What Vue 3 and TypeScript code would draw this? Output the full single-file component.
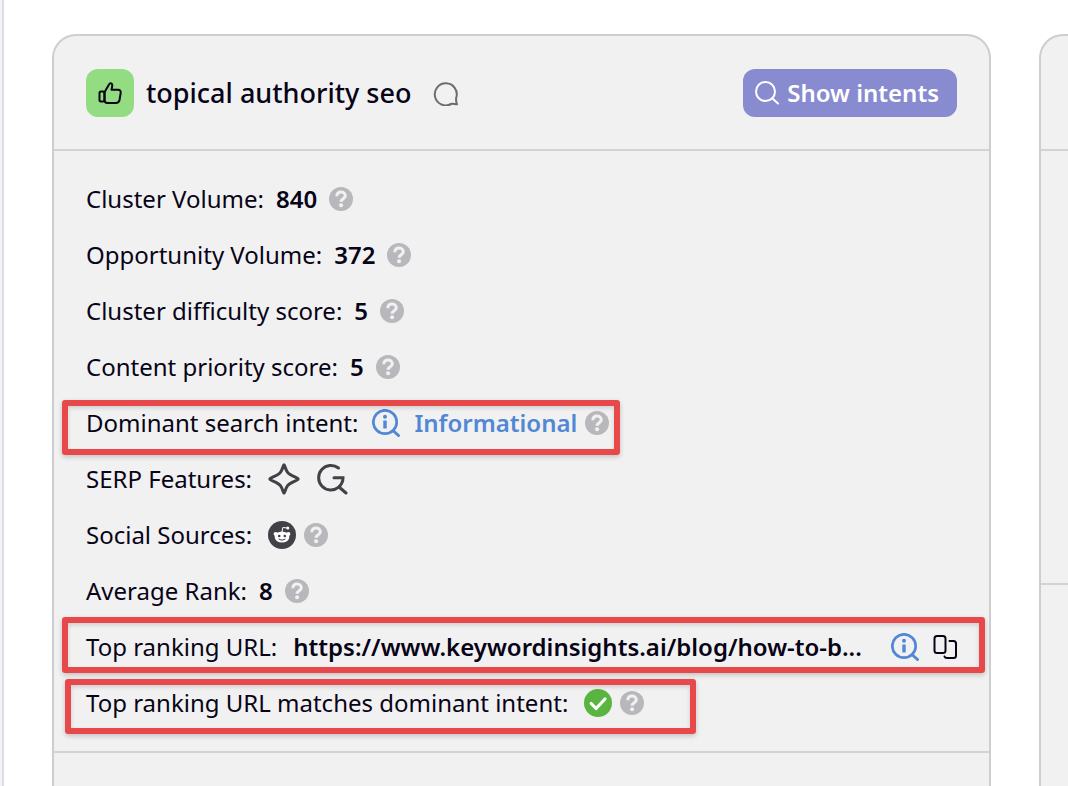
<script setup lang="ts">
import { ref } from 'vue'

interface Metric {
  id: string
  label: string
  value?: string
  kind: 'number' | 'intent' | 'serp' | 'social' | 'url' | 'match'
  help: boolean
  mark?: string
}

const metrics: Metric[] = [
  { id: 'volume', label: 'Cluster Volume:', value: '840', kind: 'number', help: true },
  { id: 'opportunity', label: 'Opportunity Volume:', value: '372', kind: 'number', help: true },
  { id: 'difficulty', label: 'Cluster difficulty score:', value: '5', kind: 'number', help: true },
  { id: 'priority', label: 'Content priority score:', value: '5', kind: 'number', help: true },
  { id: 'intent', label: 'Dominant search intent:', value: 'Informational', kind: 'intent', help: true, mark: 'mark-intent' },
  { id: 'serp', label: 'SERP Features:', kind: 'serp', help: false },
  { id: 'social', label: 'Social Sources:', kind: 'social', help: true },
  { id: 'rank', label: 'Average Rank:', value: '8', kind: 'number', help: true },
  { id: 'url', label: 'Top ranking URL:', value: 'https://www.keywordinsights.ai/blog/how-to-b...', kind: 'url', help: false, mark: 'mark-url' },
  { id: 'match', label: 'Top ranking URL matches dominant intent:', kind: 'match', help: true, mark: 'mark-match' },
]

const showIntents = ref(false)
</script>

<template>
  <div class="shell">
    <div class="rail"></div>
    <main class="page">
      <article class="card">
        <header class="head">
          <span class="badge">
            <svg width="24" height="24" viewBox="0 0 24 24" fill="none" stroke="currentColor" stroke-width="2" stroke-linejoin="round" stroke-linecap="round" aria-hidden="true">
              <path d="M6.500 11.200 11 3.600C11.600 2.500 12.300 2 13.200 2.400c1 .4 1.300 1.300 1.100 2.400L13.500 8.800H20c2 0 3 1.400 2.700 3.200l-1.200 7c-.4 2-1.700 3-3.700 3H9.500c-2 0-3-1-3-3z" />
              <rect x="1.500" y="10.500" width="5" height="10" rx="1.500" />
            </svg>
          </span>
          <h1 class="title">topical authority seo</h1>
          <button class="icon-button comment" type="button" aria-label="Comments">
            <svg width="26" height="26" viewBox="0 0 26 26" fill="none" stroke="currentColor" stroke-width="2" stroke-linejoin="round" aria-hidden="true">
              <path d="M24 24.300c-2.500-.1-4.300-.9-6-.3A11 11 0 1 1 23.300 17.500c-.6 2.300-.3 4 .7 6.800z" />
            </svg>
          </button>
          <button class="intents" type="button" :aria-pressed="showIntents" @click="showIntents = !showIntents">
            <svg width="24" height="24" viewBox="0 0 24 24" fill="none" stroke="currentColor" stroke-width="2" stroke-linecap="round" aria-hidden="true">
              <circle cx="10.500" cy="10.500" r="9.500" />
              <path d="m17.500 17.500 5.500 5" />
            </svg>
            <span>Show intents</span>
          </button>
        </header>

        <section class="metrics">
          <div v-for="m in metrics" :key="m.id" class="row">
            <span class="label">{{ m.label }}</span>

            <strong v-if="m.kind === 'number'" class="value number">{{ m.value }}</strong>

            <template v-else-if="m.kind === 'intent'">
              <svg class="info" width="28" height="28" viewBox="0 0 28 28" fill="none" aria-hidden="true">
                <circle cx="13" cy="13" r="11.700" stroke="currentColor" stroke-width="2.700" />
                <path d="m21.500 22 5 4.500" stroke="currentColor" stroke-width="3" stroke-linecap="round" />
                <circle cx="13" cy="7.700" r="2" fill="currentColor" />
                <path d="M13 11.500v8" stroke="currentColor" stroke-width="3.400" />
              </svg>
              <strong class="value intent">{{ m.value }}</strong>
            </template>

            <template v-else-if="m.kind === 'serp'">
              <svg class="serp" width="32" height="32" viewBox="0 0 32 32" fill="none" stroke="currentColor" stroke-width="3" stroke-linejoin="round" role="img" aria-label="AI overview">
                <path d="M16 1.800c.9 0 1.200 4.500 3.600 7.600C22.500 13 30.200 14.600 30.200 16s-7.700 3-10.600 6.600C17.200 25.700 16.900 30.200 16 30.200s-1.200-4.500-3.600-7.600C9.500 19 1.800 17.400 1.800 16s7.700-3 10.600-6.600C14.800 6.300 15.100 1.800 16 1.800z" />
              </svg>
              <svg class="serp" width="32" height="32" viewBox="0 0 32 32" fill="none" stroke="currentColor" stroke-width="3" stroke-linecap="round" role="img" aria-label="Search result">
                <path d="M22.500 5A12.300 12.300 0 1 0 22.800 24.200C25.600 21.500 27 18.500 27 14.800H18" />
                <path d="m23 24 7 6" />
              </svg>
            </template>

            <svg v-else-if="m.kind === 'social'" class="round" width="28" height="28" viewBox="0 0 28 28" role="img" aria-label="Reddit">
              <circle cx="14" cy="14" r="14" fill="#424147" />
              <path d="m14 11 .8-4.500 4.700.5" fill="none" stroke="#fff" stroke-width="1" />
              <circle cx="19.800" cy="7" r="1.500" fill="#fff" />
              <circle cx="7.700" cy="13" r="2.100" fill="#fff" />
              <circle cx="20.300" cy="13" r="2.100" fill="#fff" />
              <ellipse cx="14" cy="16" rx="7.400" ry="5.500" fill="#fff" />
              <circle cx="11.200" cy="15" r="1.300" fill="#424147" />
              <circle cx="16.800" cy="15" r="1.300" fill="#424147" />
              <path d="M11 18.300q3 2 6 0" fill="none" stroke="#424147" stroke-width="1" stroke-linecap="round" />
            </svg>

            <template v-else-if="m.kind === 'url'">
              <a class="value url" href="https://www.keywordinsights.ai/blog/">{{ m.value }}</a>
              <svg class="info" width="28" height="28" viewBox="0 0 28 28" fill="none" role="img" aria-label="Informational">
                <circle cx="13" cy="13" r="11.700" stroke="currentColor" stroke-width="2.700" />
                <path d="m21.500 22 5 4.500" stroke="currentColor" stroke-width="3" stroke-linecap="round" />
                <circle cx="13" cy="7.700" r="2" fill="currentColor" />
                <path d="M13 11.500v8" stroke="currentColor" stroke-width="3.400" />
              </svg>
              <button class="icon-button copy" type="button" aria-label="Copy URL">
                <svg width="24" height="24" viewBox="0 0 24 24" fill="none" stroke="currentColor" stroke-width="2" stroke-linecap="round" stroke-linejoin="round" aria-hidden="true">
                  <rect x="1.500" y="1" width="11" height="17" rx="2.500" />
                  <path d="M16.500 6H20.500q2.500 0 2.500 2.500V20.500q0 2.500-2.500 2.500H14q-2 0-2.500-1.500" />
                </svg>
              </button>
            </template>

            <svg v-else class="round" width="28" height="28" viewBox="0 0 28 28" role="img" aria-label="Yes">
              <circle cx="14" cy="14" r="14" fill="#5ab440" />
              <path d="m7.200 14.500 4.900 5L21 10" fill="none" stroke="#fff" stroke-width="3.200" stroke-linecap="round" stroke-linejoin="round" />
            </svg>

            <button v-if="m.help" class="icon-button help" type="button" :aria-label="'About ' + m.label">
              <svg width="24" height="24" viewBox="0 0 24 24" fill="none" aria-hidden="true">
                <circle cx="12" cy="12" r="12" fill="#b8b7bc" />
                <path d="M7.800 9.300C7.900 6.600 9.500 5 12 5c2.500 0 4.300 1.500 4.300 3.700 0 3-4.200 3-4.200 6" stroke="#f1f1f1" stroke-width="3" />
                <circle cx="12.100" cy="18.300" r="2" fill="#f1f1f1" />
              </svg>
            </button>

            <span v-if="m.mark" class="mark" :class="m.mark"></span>
          </div>
        </section>
      </article>

      <article class="card" aria-hidden="true">
        <div class="head"></div>
        <div class="metrics short"></div>
      </article>
    </main>
  </div>
</template>

<style>
body {
  margin: 0;
  background: #fff;
}
</style>

<style scoped>
.shell {
  display: flex;
  min-height: 100vh;
  overflow: hidden;
  background: #fff;
  color: #080417;
  font-family: 'Noto Sans', 'Open Sans', sans-serif;
  font-size: 24px;
  line-height: 32px;
}
.rail {
  flex: none;
  width: 2px;
  border-right: 2px solid #dcdde1;
  background: #f1f3f6;
}
.page {
  flex: 1;
  display: flex;
  gap: 48px;
  min-width: 0;
  padding: 34px 0 0 48px;
}
.card {
  box-sizing: border-box;
  flex: 0 0 calc(100vw - 129px);
  min-width: 0;
  border: 2px solid #cdcdd2;
  border-bottom: 0;
  border-radius: 24px 24px 0 0;
  background: #f1f1f1;
}
.head {
  box-sizing: border-box;
  display: flex;
  align-items: center;
  min-height: 115px;
  padding: 0 32px;
  border-bottom: 2px solid #d3d3d3;
}
.badge {
  display: grid;
  place-items: center;
  width: 48px;
  height: 48px;
  border-radius: 12px;
  background: #93dc81;
}
.title {
  margin: 0 0 0 12px;
  font-size: 27px;
  font-weight: 500;
}
.icon-button {
  display: block;
  flex: none;
  padding: 0;
  border: 0;
  background: none;
  color: inherit;
  line-height: 0;
  cursor: pointer;
}
.comment {
  margin-left: 22px;
  color: #6c6c6c;
}
.intents {
  display: flex;
  align-items: center;
  gap: 8px;
  height: 48px;
  margin-left: auto;
  padding: 0 18px 0 12px;
  border: 0;
  border-radius: 12px;
  background: #898bd0;
  color: #fff;
  font: inherit;
  font-weight: 600;
  white-space: nowrap;
  cursor: pointer;
}
.metrics {
  padding: 20px 32px;
  border-bottom: 2px solid #d3d3d3;
}
.short {
  min-height: 392px;
}
.row {
  position: relative;
  display: flex;
  align-items: center;
  height: 56px;
  white-space: nowrap;
}
.value {
  font-weight: 600;
}
.number {
  margin: 0 4px 0 12px;
}
.info {
  flex: none;
  margin-left: 14px;
  color: #5287d6;
}
.intent {
  margin-left: 14px;
  color: #5287d6;
}
.serp {
  margin-left: 16px;
  color: #424147;
}
.round {
  margin-left: 16px;
}
.help {
  margin-left: 8px;
}
.url {
  flex: 1;
  min-width: 0;
  overflow: hidden;
  margin-left: 16px;
  color: inherit;
  text-decoration: none;
}
.copy {
  margin-left: 14px;
}
.mark {
  position: absolute;
  box-sizing: border-box;
  border: 6px solid #e7494b;
  border-radius: 3px;
  box-shadow: 0 2px 5px rgba(0, 0, 0, 0.2), inset 0 2px 4px rgba(0, 0, 0, 0.15);
  pointer-events: none;
}
.mark-intent {
  top: 5px;
  left: -24px;
  width: 558px;
  height: 55px;
}
.mark-url {
  top: -2px;
  right: -28px;
  left: -24px;
  height: 56px;
}
.mark-match {
  top: 4px;
  left: -21px;
  width: 631px;
  height: 55px;
}
</style>
